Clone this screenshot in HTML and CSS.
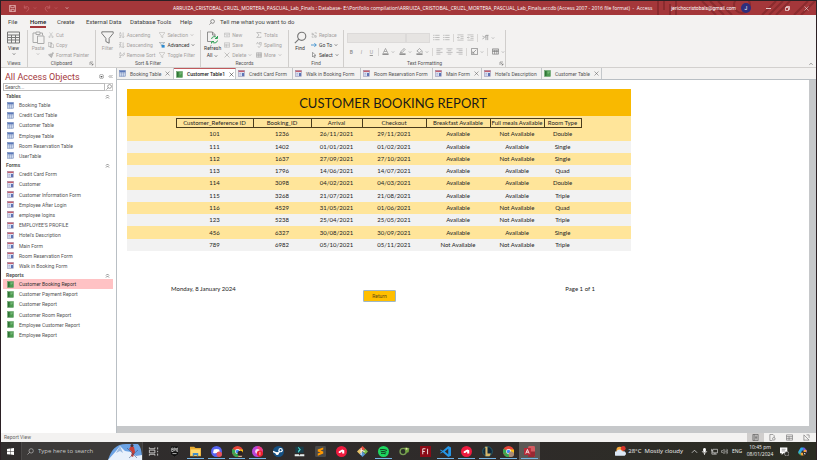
FILE: index.html
```html
<!DOCTYPE html>
<html lang="en">
<head>
<meta charset="utf-8">
<title>Customer Booking Report - Access</title>
<link rel="stylesheet" href="styles.css">
</head>
<body>
<svg class="sprite" aria-hidden="true">
  <symbol id="table" viewBox="0 0 14 14"><rect x="1" y="1" width="12" height="12" fill="#e9eff8" stroke="#6d83b4"/><path d="M1 1h12v4H1z" fill="#5b78b8"/><path d="M5 4v9M9 4v9M1 7.500h12M1 10.500h12" stroke="#7d93c2"/></symbol>
  <symbol id="form" viewBox="0 0 14 14"><rect x="1" y="1" width="12" height="12" fill="#d9def0" stroke="#8a86ab"/><path d="M1 1h12v3H1z" fill="#c2616f"/><rect x="8" y="6" width="4" height="6" fill="#5d74b5"/><path d="M3 7h3M3 10h3" stroke="#8792bd"/></symbol>
  <symbol id="report" viewBox="0 0 14 14"><rect x="1" y="1" width="12" height="12" fill="#4c9a50" stroke="#5f9a63"/><path d="M2 2h3v10H2z" fill="#2f7437"/><path d="M7 4h5M7 6h3" stroke="#a9d9a5" stroke-width="1"/></symbol>
  <symbol id="x" viewBox="0 0 10 10"><path d="M1 1l8 8M9 1l-8 8" fill="none" stroke="currentColor"/></symbol>
  <symbol id="down" viewBox="0 0 10 10"><path d="M2 3.500l3 3 3-3" fill="none" stroke="currentColor" stroke-width="1.500"/></symbol>
  <symbol id="up2" viewBox="0 0 10 10"><path d="M2 5l3-3 3 3M2 9l3-3 3 3" fill="none" stroke="currentColor" stroke-width="1.300"/></symbol>
  <symbol id="search" viewBox="0 0 16 16"><circle cx="9.500" cy="6.500" r="5" fill="none" stroke="currentColor" stroke-width="1.400"/><path d="M6 10l-5 5" stroke="currentColor" stroke-width="1.400"/></symbol>
  <symbol id="funnel" viewBox="0 0 16 16"><path d="M1 1h14v2L10 9v6l-4-2V9L1 3z" fill="none" stroke="currentColor" stroke-width="1.200"/></symbol>
  <symbol id="launch" viewBox="0 0 10 10"><path d="M2 8V2h6M4 4l4 4M8 5v3H5" fill="none" stroke="currentColor"/></symbol>
  <symbol id="lines" viewBox="0 0 16 16"><path d="M1 2h14M1 6h9M1 10h14M1 14h9" stroke="currentColor" stroke-width="1.300"/></symbol>
  <symbol id="linesc" viewBox="0 0 16 16"><path d="M1 2h14M4 6h8M1 10h14M4 14h8" stroke="currentColor" stroke-width="1.300"/></symbol>
  <symbol id="linesr" viewBox="0 0 16 16"><path d="M1 2h14M6 6h9M1 10h14M6 14h9" stroke="currentColor" stroke-width="1.300"/></symbol>
  <symbol id="bullets" viewBox="0 0 16 16"><path d="M5 3h10M5 8h10M5 13h10" stroke="currentColor" stroke-width="1.300"/><path d="M1 3h2M1 8h2M1 13h2" stroke="currentColor" stroke-width="2"/></symbol>
  <symbol id="indent" viewBox="0 0 16 16"><path d="M1 2h14M8 6h7M8 10h7M1 14h14M6 8H1M3 6L1 8l2 2" fill="none" stroke="currentColor" stroke-width="1.200"/></symbol>
  <symbol id="red-disc" viewBox="0 0 16 16"><circle cx="8" cy="8" r="8" fill="#ee1b3f"/><path d="M4 10V8l5-3 3 1v5H9V8L6 10z" fill="#fff"/></symbol>
  <symbol id="chrome" viewBox="0 0 16 16"><circle cx="8" cy="8" r="8" fill="#e8463a"/><path d="M8 8L1 12A8 8 0 0 1 1 4z" fill="#36a852"/><path d="M1 12a8 8 0 0 0 8 4l3-6-4-1z" fill="#36a852"/><path d="M8 5h7.500A8 8 0 0 1 9 16l3-6z" fill="#fbc116"/><circle cx="8" cy="8" r="3.500" fill="#fff"/><circle cx="8" cy="8" r="2.600" fill="#4285f4"/></symbol>
</svg>

<header class="titlebar">
  <div class="quick">
    <button aria-label="Save"><svg viewBox="0 0 16 16"><path d="M1 1h14v14H1zM4 1v5h8V1M4 15v-5h8v5M6 12v3" fill="none" stroke="#f0c9ca" stroke-width="1.500"/></svg></button>
    <button class="faded" aria-label="Undo"><svg viewBox="0 0 16 16"><path d="M3 1v6h6M3 7c5-6 11-3 10 2-1 3-3 5-5 6" fill="none" stroke="#c9696c" stroke-width="1.600"/></svg><svg class="tiny"><use href="#down"/></svg></button>
    <button class="faded" aria-label="Redo"><svg viewBox="0 0 16 16"><path d="M13 1v6H7M13 7C8 1 2 4 3 9c1 3 3 5 5 6" fill="none" stroke="#c9696c" stroke-width="1.600"/></svg><svg class="tiny"><use href="#down"/></svg></button>
    <button aria-label="Customize toolbar"><svg class="tiny"><use href="#down"/></svg></button>
  </div>
  <h1>ARRUIZA_CRISTOBAL_CRUZL_MORTERA_PASCUAL_Lab_Finals : Database- E:\Portfolio compilation\ARRUIZA_CRISTOBAL_CRUZL_MORTERA_PASCUAL_Lab_Finals.accdb (Access 2007 - 2016 file format) &nbsp;- &nbsp;Access</h1>
  <div class="account">
    <svg class="circuit" viewBox="0 0 160 14" preserveAspectRatio="none" aria-hidden="true"><g fill="none" stroke="#8a2b2e" stroke-width="2"><path d="M2 0v14M8 0v9M14 3v11M20 0v14M46 0l14 14M54 0l14 14M62 0l14 14"/><circle cx="86" cy="4" r="8"/><path d="M106 14l14-14M113 14l14-14M120 14l14-14M138 14l14-14M145 14l14-14"/></g></svg>
    <span class="mail">jerichocristobals@gmail.com</span><span class="avatar">J</span>
    <button aria-label="Minimize"><svg viewBox="0 0 10 10"><path d="M0 5h10" stroke="#fff" stroke-width="1.500"/></svg></button>
    <button aria-label="Restore"><svg viewBox="0 0 10 10"><path d="M1 3h6v6H1zM3 3V1h6v6H7" fill="none" stroke="#fff" stroke-width="1.300"/></svg></button>
    <button aria-label="Close"><svg><use href="#x"/></svg></button>
  </div>
</header>

<nav class="menu">
  <button class="w-file">File</button><button class="w-home on">Home</button><button class="w-create">Create</button><button class="w-ext">External Data</button><button class="w-db">Database Tools</button><button class="w-help">Help</button>
  <button class="tell"><svg><use href="#search"/></svg>Tell me what you want to do</button>
</nav>

<section class="ribbon" aria-label="Home ribbon">
  <div class="group g-views"><div class="tools">
    <button class="big dark"><svg viewBox="0 0 26 26"><path d="M1 2h24v22H1zM1 8h24M1 13h24M1 18h24M9 8v16M17 8v16" fill="none" stroke="#777" stroke-width="2"/></svg>View<svg class="tiny"><use href="#down"/></svg></button>
  </div><div class="label">Views</div></div>
  <div class="group g-clip"><div class="tools">
    <button class="big"><svg viewBox="0 0 26 26"><path d="M8 4H2v19h8M8 2h8v5H8zM16 4h5v5M11 10h13v15H11z" fill="none" stroke="#aaa" stroke-width="2"/></svg>Paste<svg class="tiny"><use href="#down"/></svg></button>
    <div class="stack">
      <button><svg viewBox="0 0 16 16"><path d="M4 1l7 10M12 1L5 11" stroke="#999"/><circle cx="4" cy="13" r="2" fill="none" stroke="#999"/><circle cx="12" cy="13" r="2" fill="none" stroke="#999"/></svg>Cut</button>
      <button><svg viewBox="0 0 16 16"><path d="M1 1h8v11H1zM6 4h5l4 4v7H6z" fill="#f3f2f1" stroke="#999" stroke-width="1.300"/></svg>Copy</button>
      <button><svg viewBox="0 0 16 16"><path d="M1 7l7-2 4 4-3 6zM9 5l4-4 2 2-4 5" fill="#bbb" stroke="#888"/></svg>Format Painter</button>
    </div>
  </div><div class="label">Clipboard<svg class="corner"><use href="#launch"/></svg></div></div>
  <div class="group g-sort"><div class="tools">
    <button class="big"><svg><use href="#funnel"/></svg>Filter</button>
    <div class="stack">
      <button><svg viewBox="0 0 16 16"><path d="M1 7l2.500-6L6 7M1 9h5l-5 6h5M11 1v14M8 12l3 3 3-3" fill="none" stroke="#999" stroke-width="1.300"/></svg>Ascending</button>
      <button><svg viewBox="0 0 16 16"><path d="M1 1h5L1 7h5M1 15l2.500-6L6 15M11 1v14M8 12l3 3 3-3" fill="none" stroke="#999" stroke-width="1.300"/></svg>Descending</button>
      <button><svg viewBox="0 0 16 16"><path d="M1 7l2.500-6L6 7M1 9h5l-5 6h5M8 9l6-7 2 3-6 6z" fill="none" stroke="#999" stroke-width="1.300"/></svg>Remove Sort</button>
    </div>
    <div class="stack">
      <button><svg><use href="#funnel"/></svg>Selection<svg class="tiny"><use href="#down"/></svg></button>
      <button class="dark"><svg viewBox="0 0 16 16"><path d="M1 1h14L10 7v3H6V7z" fill="#d5e9f8" stroke="#666"/><rect x="7" y="8" width="8" height="7" fill="#2b8ad0"/></svg>Advanced<svg class="tiny"><use href="#down"/></svg></button>
      <button><svg><use href="#funnel"/></svg>Toggle Filter</button>
    </div>
  </div><div class="label">Sort &amp; Filter</div></div>
  <div class="group g-rec"><div class="tools">
    <button class="big dark"><svg viewBox="0 0 26 26"><path d="M10 21H3V2h10l5 5v3M13 2v6h5" fill="none" stroke="#777" stroke-width="1.600"/><path d="M11 16a6 6 0 0 1 11-2M23 10v5h-5M23 19a6 6 0 0 1-11 2M11 25v-4h5" fill="none" stroke="#35a35a" stroke-width="2"/></svg>Refresh<span>All<svg class="tiny"><use href="#down"/></svg></span></button>
    <div class="stack">
      <button><svg viewBox="0 0 16 16"><path d="M1 3h14v10H1zM1 6h14M5 10h7" fill="none" stroke="#999"/></svg>New</button>
      <button><svg viewBox="0 0 16 16"><path d="M1 2h14v12H1zM1 6h14M1 10h14M6 6v8" fill="none" stroke="#999"/></svg>Save</button>
      <button><svg><use href="#x"/></svg>Delete<svg class="tiny"><use href="#down"/></svg></button>
    </div>
    <div class="stack">
      <button><svg viewBox="0 0 16 16"><path d="M13 4V1H2l6 7-6 7h11v-3" fill="none" stroke="#999" stroke-width="1.500"/></svg>Totals</button>
      <button><svg viewBox="0 0 16 16"><path d="M1 6l3-5 3 5M9 1h5v5H9zM5 11l3 4 7-8" fill="none" stroke="#999" stroke-width="1.300"/></svg>Spelling</button>
      <button><svg viewBox="0 0 16 16"><path d="M1 2h14v12H1zM1 6h14M1 10h14M6 2v12M11 2v12" fill="none" stroke="#777"/></svg>More<svg class="tiny"><use href="#down"/></svg></button>
    </div>
  </div><div class="label">Records</div></div>
  <div class="group g-find"><div class="tools">
    <button class="big dark"><svg><use href="#search"/></svg>Find</button>
    <div class="stack">
      <button><svg viewBox="0 0 16 16"><path d="M3 2v6h4V5H3M10 8v6h4v-4h-4M3 11v3h4M10 2h4v3" fill="none" stroke="#999" stroke-width="1.300"/></svg>Replace</button>
      <button class="dark"><svg viewBox="0 0 16 16"><path d="M0 8h14M9 3l5 5-5 5" fill="none" stroke="#1e7fc8" stroke-width="2"/></svg>Go To<svg class="tiny"><use href="#down"/></svg></button>
      <button class="dark"><svg viewBox="0 0 16 16"><path d="M4 1l9 8H9l2 5-2 1-2-5-3 3z" fill="#fff" stroke="#444" stroke-width="1.300"/></svg>Select<svg class="tiny"><use href="#down"/></svg></button>
    </div>
  </div><div class="label">Find</div></div>
  <div class="group g-text"><div class="format">
    <div class="line">
      <select class="font" aria-label="Font" disabled></select><select class="size" aria-label="Font size" disabled></select>
      <button aria-label="Bullets"><svg><use href="#bullets"/></svg></button><button aria-label="Numbering"><svg><use href="#bullets"/></svg></button><i></i>
      <button aria-label="Decrease indent"><svg><use href="#indent"/></svg></button><button aria-label="Increase indent"><svg><use href="#indent"/></svg></button><i></i>
      <button class="pair" aria-label="Text direction"><svg viewBox="0 0 16 16"><path d="M1 4l4 4-4 4M9 3v11M13 3v11M15 3H9a3 3 0 0 0 0 5" fill="none" stroke="#888" stroke-width="1.500"/></svg><svg class="tiny"><use href="#down"/></svg></button>
    </div>
    <div class="line marks">
      <button><b>B</b></button><button><em>I</em></button><button><u>U</u></button><i></i>
      <button class="pair" aria-label="Font color"><svg viewBox="0 0 16 16"><path d="M3 11L8 1l5 10M5 8h6" fill="none" stroke="#888" stroke-width="1.500"/><path d="M1 14h14" stroke="#777" stroke-width="3"/></svg><svg class="tiny"><use href="#down"/></svg></button>
      <button class="pair" aria-label="Highlight color"><svg viewBox="0 0 16 16"><path d="M3 11l2-4 7-6 2 2-6 7z" fill="none" stroke="#888" stroke-width="1.500"/><path d="M1 14h14" stroke="#777" stroke-width="3"/></svg><svg class="tiny"><use href="#down"/></svg></button>
      <button class="pair" aria-label="Background color"><svg viewBox="0 0 16 16"><path d="M2 7l6-6 5 5-5 5zM14 7v4" fill="none" stroke="#888" stroke-width="1.500"/><path d="M1 14h14" stroke="#777" stroke-width="3"/></svg><svg class="tiny"><use href="#down"/></svg></button><i></i>
      <button aria-label="Align left"><svg><use href="#lines"/></svg></button><button aria-label="Center"><svg><use href="#linesc"/></svg></button><button aria-label="Align right"><svg><use href="#linesr"/></svg></button><i></i>
      <button class="pair" aria-label="Alternate row color"><svg viewBox="0 0 16 16"><path d="M1 1h14v14H1zM4 12l8-8M4 8v4h4" fill="none" stroke="#777" stroke-width="1.500"/></svg><svg class="tiny"><use href="#down"/></svg></button><i></i>
      <button class="pair" aria-label="Gridlines"><svg viewBox="0 0 16 16"><path d="M1 2h14v12H1zM1 8h14M6 5v9M11 5v9M1 5h14" fill="none" stroke="#777" stroke-width="1.500"/></svg><svg class="tiny"><use href="#down"/></svg></button>
    </div>
  </div><div class="label">Text Formatting<svg class="corner"><use href="#launch"/></svg></div></div>
  <button class="collapse" aria-label="Collapse ribbon"><svg viewBox="0 0 10 10"><path d="M1 7l4-4 4 4" fill="none" stroke="#555" stroke-width="1.500"/></svg></button>
</section>

<main>
  <aside>
    <div class="pane-head"><h2>All Access Objects</h2>
      <button aria-label="Choose view"><svg viewBox="0 0 10 10"><circle cx="5" cy="5" r="4.300" fill="none" stroke="#666"/><path d="M2.500 4h5L5 7.500z" fill="#555"/></svg></button>
      <button aria-label="Hide pane"><svg viewBox="0 0 10 10"><path d="M5 2L2 5l3 3M9 2L6 5l3 3" fill="none" stroke="#444"/></svg></button></div>
    <div class="find"><input type="text" placeholder="Search..." aria-label="Search objects"><button aria-label="Search"><svg><use href="#search"/></svg></button></div>
    <h3>Tables<svg><use href="#up2"/></svg></h3>
    <ul class="six">
      <li><a href="#"><svg><use href="#table"/></svg>Booking Table</a></li>
      <li><a href="#"><svg><use href="#table"/></svg>Credit Card Table</a></li>
      <li><a href="#"><svg><use href="#table"/></svg>Customer Table</a></li>
      <li><a href="#"><svg><use href="#table"/></svg>Employee Table</a></li>
      <li><a href="#"><svg><use href="#table"/></svg>Room Reservation Table</a></li>
      <li><a href="#"><svg><use href="#table"/></svg>UserTable</a></li>
    </ul>
    <h3>Forms<svg><use href="#up2"/></svg></h3>
    <ul class="ten">
      <li><a href="#"><svg><use href="#form"/></svg>Credit Card Form</a></li>
      <li><a href="#"><svg><use href="#form"/></svg>Customer</a></li>
      <li><a href="#"><svg><use href="#form"/></svg>Customer Information Form</a></li>
      <li><a href="#"><svg><use href="#form"/></svg>Employee After Login</a></li>
      <li><a href="#"><svg><use href="#form"/></svg>employee logins</a></li>
      <li><a href="#"><svg><use href="#form"/></svg>EMPLOYEE'S PROFILE</a></li>
      <li><a href="#"><svg><use href="#form"/></svg>Hotel's Description</a></li>
      <li><a href="#"><svg><use href="#form"/></svg>Main Form</a></li>
      <li><a href="#"><svg><use href="#form"/></svg>Room Reservation Form</a></li>
      <li><a href="#"><svg><use href="#form"/></svg>Walk in Booking Form</a></li>
    </ul>
    <h3>Reports<svg><use href="#up2"/></svg></h3>
    <ul class="six">
      <li class="sel"><a href="#"><svg><use href="#report"/></svg>Customer Booking Report</a></li>
      <li><a href="#"><svg><use href="#report"/></svg>Customer Payment Report</a></li>
      <li><a href="#"><svg><use href="#report"/></svg>Customer Report</a></li>
      <li><a href="#"><svg><use href="#report"/></svg>Customer Room Report</a></li>
      <li><a href="#"><svg><use href="#report"/></svg>Employee Customer Report</a></li>
      <li><a href="#"><svg><use href="#report"/></svg>Employee Report</a></li>
    </ul>
  </aside>

  <div class="work">
    <div class="tabs" role="tablist">
      <button role="tab" class="t1"><svg><use href="#table"/></svg><span>Booking Table</span><svg class="close"><use href="#x"/></svg></button>
      <button role="tab" class="t2 on"><svg><use href="#report"/></svg><span>Customer Table1</span><svg class="close"><use href="#x"/></svg></button>
      <button role="tab" class="t1"><svg><use href="#form"/></svg><span>Credit Card Form</span></button>
      <button role="tab" class="t3"><svg><use href="#form"/></svg><span>Walk in Booking Form</span></button>
      <button role="tab" class="t4"><svg><use href="#form"/></svg><span>Room Reservation Form</span></button>
      <button role="tab" class="t5"><svg><use href="#form"/></svg><span>Main Form</span><svg class="close"><use href="#x"/></svg></button>
      <button role="tab" class="t6"><svg><use href="#form"/></svg><span>Hotel's Description</span></button>
      <button role="tab" class="t6"><svg><use href="#report"/></svg><span>Customer Table</span><svg class="close"><use href="#x"/></svg></button>
    </div>
    <div class="canvas">
      <article class="report">
        <h2>CUSTOMER BOOKING REPORT</h2>
        <div class="sheet">
        <table>
          <colgroup><col class="c0"><col class="c1"><col class="c2"><col class="c3"><col class="c4"><col class="c4"><col class="c5"><col class="c6"><col></colgroup>
          <thead><tr><td></td><th>Customer_Reference ID</th><th>Booking_ID</th><th>Arrival</th><th>Checkout</th><th>Breakfast Available</th><th>Full meals Available</th><th>Room Type</th><td></td></tr></thead>
          <tbody>
            <tr><td></td><td>101</td><td>1236</td><td>26/11/2021</td><td>29/11/2021</td><td>Available</td><td>Not Available</td><td>Double</td><td></td></tr>
            <tr><td></td><td>111</td><td>1402</td><td>01/01/2021</td><td>01/02/2021</td><td>Available</td><td>Available</td><td>Single</td><td></td></tr>
            <tr><td></td><td>112</td><td>1637</td><td>27/09/2021</td><td>27/10/2021</td><td>Available</td><td>Not Available</td><td>Single</td><td></td></tr>
            <tr><td></td><td>113</td><td>1796</td><td>14/06/2021</td><td>14/07/2021</td><td>Available</td><td>Available</td><td>Quad</td><td></td></tr>
            <tr><td></td><td>114</td><td>3098</td><td>04/02/2021</td><td>04/03/2021</td><td>Available</td><td>Available</td><td>Double</td><td></td></tr>
            <tr><td></td><td>115</td><td>3268</td><td>21/07/2021</td><td>21/08/2021</td><td>Available</td><td>Available</td><td>Triple</td><td></td></tr>
            <tr><td></td><td>116</td><td>4529</td><td>31/05/2021</td><td>01/06/2021</td><td>Available</td><td>Not Available</td><td>Quad</td><td></td></tr>
            <tr><td></td><td>123</td><td>5238</td><td>25/04/2021</td><td>25/05/2021</td><td>Available</td><td>Not Available</td><td>Triple</td><td></td></tr>
            <tr><td></td><td>456</td><td>6327</td><td>30/08/2021</td><td>30/09/2021</td><td>Available</td><td>Available</td><td>Single</td><td></td></tr>
            <tr><td></td><td>789</td><td>6982</td><td>05/10/2021</td><td>05/11/2021</td><td>Not Available</td><td>Not Available</td><td>Triple</td><td></td></tr>
          </tbody>
        </table>
        </div>
        <footer><span>Monday, 8 January 2024</span><button>Return</button><span>Page 1 of 1</span></footer>
      </article>
    </div>
  </div>
</main>

<div class="status"><span>Report View</span>
  <div class="views">
    <button class="on" aria-label="Report view"><svg viewBox="0 0 16 16"><path d="M2 1h12v14H2zM5 1v14M7 5h5M7 8h5M7 11h5" fill="none" stroke="#555" stroke-width="1.500"/></svg></button>
    <button aria-label="Print preview"><svg viewBox="0 0 16 16"><path d="M8 15H2V1h7l3 3v4" fill="none" stroke="#777" stroke-width="1.500"/><circle cx="11" cy="11" r="3" fill="none" stroke="#777" stroke-width="1.500"/></svg></button>
    <button aria-label="Layout view"><svg viewBox="0 0 16 16"><path d="M1 2h14v12H1zM1 6h14M1 10h14M7 6v8" fill="none" stroke="#777" stroke-width="1.500"/></svg></button>
    <button aria-label="Design view"><svg viewBox="0 0 16 16"><path d="M2 15V2l12 12H2M14 2v7M8 2h6" fill="none" stroke="#777" stroke-width="1.500"/></svg></button>
  </div>
</div>

<div class="taskbar">
  <button class="start" aria-label="Start"><svg viewBox="0 0 16 16"><path d="M0 2l7-1v6.500H0zM8 1l8-1v7.500H8zM0 8.500h7V15l-7-1zM8 8.500h8V16l-8-1z" fill="#fff"/></svg></button>
  <label class="seek"><svg><use href="#search"/></svg><input type="text" placeholder="Type here to search">
    <svg class="scene" viewBox="0 0 34 17"><path d="M0 17C3 7 8 1 18 1h12c3 3 4 8 4 16z" fill="#6ba2e4"/><path d="M0 17L8 8l4-5 5 5 6 1 5 4 6-1v5z" fill="#e8f0fb"/><path d="M8 10l4-7 3 7-3-2z" fill="#9ab8df"/><path d="M23 3l3 1 1 5-2 5-2-1 1-4-3-3z" fill="#c93f37"/><circle cx="24" cy="2.500" r="1.500" fill="#473039"/><path d="M19 5l10 10M30 7l-9 8" stroke="#344a72" stroke-width="0.500"/></svg></label>
  <div class="apps">
    <button aria-label="Task view"><svg viewBox="0 0 16 16"><path d="M2 2v2h8V2M2 14v-2h8v2M2 6h8v4H2zM14 2v3M14 7v2M14 11v3" fill="none" stroke="#ddd" stroke-width="1.200"/></svg></button>
    <button aria-label="Epic Games"><svg viewBox="0 0 16 16"><path d="M2 0h12v12l-6 4-6-4z" fill="#111" stroke="#555" stroke-width="0.500"/><path d="M6 3H4v5h2M4 5h2M7 8V3h2v3H7M10.500 3v5M13 3h-1v5h1M5 11h6" stroke="#eee" fill="none"/></svg></button>
    <button class="run" aria-label="File Explorer"><svg viewBox="0 0 16 16"><path d="M0 1h6l2 2h8v12H0z" fill="#e8ab32"/><path d="M1 5h14v9H1z" fill="#ffd96f"/><path d="M4 10h8v5h-2v-2H6v2H4z" fill="#438ec8"/></svg></button>
    <button class="run" aria-label="Discord"><svg viewBox="0 0 16 16"><circle cx="8" cy="8" r="8" fill="#5865f2"/><path d="M4 5c3-1 5-1 8 0l1 5-3 1-1-1H7l-1 1-3-1z" fill="#fff"/><circle cx="12" cy="12" r="4" fill="#e6535c"/></svg></button>
    <button class="run" aria-label="Chrome"><svg viewBox="0 0 16 16"><use href="#chrome"/><circle cx="12" cy="11" r="4" fill="#2b2222"/><path d="M9 14h6l-1 2h-4z" fill="#d9ae8a"/></svg></button>
    <button class="run" aria-label="Opera"><svg viewBox="0 0 16 16"><circle cx="8" cy="8" r="8" fill="#b845d8"/><path d="M8 0a8 8 0 0 1 8 8H8z" fill="#f23d7f"/><circle cx="8" cy="8" r="3.500" fill="#f7d8ef"/><circle cx="11.500" cy="11" r="4.500" fill="#ec1f2c"/><path d="M11.500 8.500v5" stroke="#fff"/></svg></button>
    <button aria-label="Steam"><svg viewBox="0 0 16 16"><circle cx="8" cy="8" r="8" fill="#155184"/><path d="M0 8l7 3 4-5" stroke="#fff" stroke-width="2" fill="none"/><circle cx="11" cy="6" r="3.200" fill="#fff"/><circle cx="11" cy="6" r="1.500" fill="#155184"/><circle cx="6" cy="11" r="2.200" fill="#fff"/></svg></button>
    <button aria-label="Filmora"><svg viewBox="0 0 16 16"><path d="M2 1h12v9H2z" fill="#193e4a"/><path d="M6 1l4 4-4 5V7l2-2-2-2z" fill="#4adfd2"/><path d="M1 12h6l1 2 1-2h6v3H1z" fill="#e8eeee"/></svg></button>
    <button aria-label="Sublime Text"><svg viewBox="0 0 16 16"><rect width="16" height="16" rx="2" fill="#4b4a49"/><path d="M12 2v3L8 6.500l4 1.500v3l-8 3v-3l4-1.500L4 8V5z" fill="#ff9800"/></svg></button>
    <button aria-label="Riot Client"><svg><use href="#red-disc"/></svg></button>
    <button aria-label="Git"><svg viewBox="0 0 16 16"><path d="M8 0l4 4-4 4-4-4z" fill="#e55140"/><path d="M12 4l4 4-4 4-4-4z" fill="#7fbd4d"/><path d="M4 4l4 4-4 4-4-4z" fill="#e9c46a"/><path d="M8 8l4 4-4 4-4-4z" fill="#5895d0"/><path d="M6 3v10M6 6l5 2" stroke="#fff" stroke-width="1.400"/></svg></button>
    <button class="run" aria-label="Spotify"><svg viewBox="0 0 16 16"><circle cx="8" cy="8" r="8" fill="#1ed760"/><path d="M3 5.500c4-1 7-.5 10 1M4 8.500c3-1 6-.5 8 .7M4.500 11c3-.7 5-.3 6.500.7" fill="none" stroke="#143b20" stroke-width="1.500"/></svg></button>
    <button aria-label="Editor"><svg viewBox="0 0 16 16"><circle cx="6" cy="8" r="4.500" fill="#292e28" stroke="#789c54" stroke-width="2"/><path d="M8 2l7 1-1 6-4 1z" fill="#73a742"/><circle cx="11" cy="4" r="1.500" fill="#e7dfab"/></svg></button>
    <button aria-label="Flash"><svg viewBox="0 0 16 16"><rect width="16" height="16" fill="#8b0b17"/><path d="M4 12V4h4M4 8h3M11 4v8" stroke="#fff" fill="none" stroke-width="1.200"/></svg></button>
    <button class="run" aria-label="Visual Studio Code"><svg viewBox="0 0 16 16"><path d="M12 0l4 2v12l-4 2-8-7-3 2-1-1 3-2-3-2 1-1 3 2zM12 4L7 8l5 4z" fill="#2496e8" fill-rule="evenodd"/></svg></button>
    <button class="run" aria-label="Riot"><svg><use href="#red-disc"/></svg></button>
    <button class="run" aria-label="League of Legends"><svg viewBox="0 0 16 16"><circle cx="8" cy="8" r="7" fill="#10273a" stroke="#247489"/><path d="M4 1h4v10h5l-2 4H5V3z" fill="#d6b66a"/></svg></button>
    <button class="run" aria-label="Chrome profile"><svg viewBox="0 0 16 16"><use href="#chrome"/><circle cx="12" cy="12" r="4" fill="#a98b75"/></svg></button>
    <button class="run active" aria-label="Access"><svg viewBox="0 0 16 16"><rect x="6" y="0" width="10" height="16" rx="2" fill="#d45b61"/><path d="M6 8h10v6a2 2 0 0 1-2 2H6z" fill="#992934"/><rect y="3" width="10" height="10" fill="#b72a38"/><path d="M2.500 11L5 5l2.500 6M3.500 9h3" stroke="#fff" fill="none" stroke-width="1.200"/></svg></button>
  </div>
  <div class="tray">
    <button class="weather"><svg viewBox="0 0 16 16"><circle cx="7" cy="6" r="5" fill="#f5a83a"/><path d="M1 14a3 3 0 0 1 1-6 5 5 0 0 1 9 0 3 3 0 0 1 3 6z" fill="#dce7f6"/><circle cx="12" cy="3.500" r="3.500" fill="#d8332b"/></svg>28°C &nbsp;Mostly cloudy</button>
    <button aria-label="Hidden icons"><svg viewBox="0 0 16 16"><path d="M2 11l6-6 6 6" fill="none" stroke="#eee" stroke-width="1.600"/></svg></button>
    <button aria-label="Microphone"><svg viewBox="0 0 16 16"><rect x="5" y="0" width="6" height="10" rx="3" fill="#fff"/><path d="M3 7c0 6 10 6 10 0M8 11v5" fill="none" stroke="#fff" stroke-width="1.500"/></svg></button>
    <button aria-label="Network"><svg viewBox="0 0 16 16"><path d="M4 3h11v8H4zM1 2v4h3M2 6v8h11M9 11v3" fill="none" stroke="#eee" stroke-width="1.400"/></svg></button>
    <button aria-label="Volume"><svg viewBox="0 0 16 16"><path d="M1 6h3l3-3v10l-3-3H1zM9 6c1 1 1 3 0 4M11 4c2 2 2 6 0 8M13 2c3 3 3 9 0 12" fill="none" stroke="#ddd" stroke-width="1.200"/></svg></button>
    <button class="lang">ENG</button>
    <button class="clock"><span>10:45 pm</span><span>08/01/2024</span></button>
    <button class="wide" aria-label="Notifications"><svg viewBox="0 0 16 16"><path d="M0 1h13v10H6l-3 3v-3H0z" fill="#fff"/><path d="M3 4h7M3 7h6" stroke="#555"/><circle cx="12" cy="12" r="4" fill="#30302b" stroke="#ccc"/></svg></button>
    <button class="wide" aria-label="Copilot"><svg viewBox="0 0 16 16"><path d="M5 1h5l2 5H7l-2 6H2C0 12 0 10 1 7z" fill="#2fa8e8"/><path d="M10 1c3 0 3 2 4 4h1c2 1 1 4 0 6l-2-5H8z" fill="#6d55e0"/><path d="M11 15H6l-2-5h5l2-5h3c2 1 1 4 0 6z" fill="#f2a33a"/><path d="M1 7l3 5 2 3C3 15 3 13 2 12z" fill="#55c66a"/><path d="M9 9h6v6H9z" fill="#222"/><path d="M10 13l2-3 2 3z" fill="#fff"/></svg></button>
  </div>
</div>
</body>
</html>
```
FILE: styles.css
```css
* { box-sizing: border-box; }
body {
  margin: 0; height: 100vh; display: flex; flex-direction: column; overflow: hidden;
  border: 1px solid #2b2024; border-bottom: 0; background: #f3f2f1;
  font: 5px/8px Roboto, "Noto Sans", sans-serif; color: #555;
}
h1, h2, h3, ul { margin: 0; padding: 0; font-weight: 400; }
button, input, select { font: inherit; color: inherit; background: none; border: 0; margin: 0; padding: 0; }
button { display: flex; align-items: center; white-space: nowrap; }
svg { width: 7px; height: 7px; flex: none; display: block; }
svg.tiny { width: 4px; height: 4px; }
.sprite { position: absolute; width: 0; height: 0; }

.titlebar { flex: none; height: 14px; display: flex; align-items: center; background: #a4373a; color: #fff; }
.quick { display: flex; align-items: center; width: 172px; padding-left: 8px; gap: 7px; }
.quick button { gap: 3px; }
.faded { color: #c9696c; }
.titlebar h1 { font: 5px/8px "Open Sans", "Noto Sans", sans-serif; white-space: nowrap; }
.account { position: relative; display: flex; align-items: center; justify-content: flex-end; flex: 1; height: 14px; padding-right: 7px; }
.account > * { position: relative; }
.account .circuit { position: absolute; top: 0; right: 0; width: 160px; height: 14px; }
.avatar { width: 10px; height: 10px; margin: 0 15px 0 5px; border-radius: 50%; background: #2e2f7d; text-align: center; line-height: 10px; }
.account button { margin-left: 14px; }
.account .avatar + button { margin-left: 0; }
.account button svg { width: 5px; height: 5px; }

.menu { flex: none; height: 14px; display: flex; align-items: center; padding-left: 7px; font-size: 6px; color: #444; }
.menu button { height: 12px; }
.menu .on { font-weight: 500; color: #222; box-shadow: inset 0 -2px #a4373a; }
.w-file { width: 22px; }
.w-home { width: 16px; margin-right: 11px; }
.w-create { width: 29px; }
.w-ext { width: 44px; }
.w-db { width: 50px; }
.w-help { width: 29px; }
.tell { gap: 5px; }
.tell svg { width: 6px; height: 6px; }

.ribbon { flex: none; height: 39px; display: flex; border-bottom: 1px solid #d2d0ce; color: #a3a19f; }
.group { display: flex; flex-direction: column; border-right: 1px solid #d0cecc; margin: 1px 0 0; }
.tools { display: flex; flex: 1; }
.label { position: relative; height: 7px; line-height: 7px; text-align: center; color: #555; }
.corner { position: absolute; right: 1px; top: 1px; width: 5px; height: 5px; }
.big { flex-direction: column; height: 30px; line-height: 7px; padding-top: 1px; }
.big > svg:first-child { width: 13px; height: 13px; margin-bottom: 1px; color: #777; }
.big span { display: flex; align-items: center; gap: 2px; }
.dark { color: #333; }
.stack { display: flex; flex-direction: column; }
.stack button { height: 10px; gap: 2px; }
.stack svg:first-child { width: 6px; height: 6px; }
.g-views { width: 27px; }
.g-views .big { width: 25px; }
.g-clip { width: 68px; }
.g-clip .big { width: 20px; }
.g-sort { width: 105px; }
.g-sort .big { width: 23px; }
.g-sort .stack { width: 41px; }
.g-rec { width: 88px; }
.g-rec .big { width: 24px; }
.g-rec .stack { width: 33px; }
.g-find { width: 55px; }
.g-find .big { width: 22px; }
.g-text { width: 162px; }
.format { flex: 1; padding-left: 3px; }
.line { display: flex; align-items: center; gap: 3px; height: 15px; color: #999; }
.line button { width: 7px; justify-content: center; }
.line .pair { width: 14px; gap: 2px; }
.line i { width: 1px; height: 8px; background: #d8d6d4; }
.marks { height: 13px; padding-left: 1px; }
.line select { height: 10px; background: #e1dfdd; border: 1px solid #d3d1cf; appearance: none; }
.font { width: 59px; }
.size { width: 24px; margin-left: -3px; }
.collapse { margin: auto 3px 1px auto; }
.collapse svg { width: 4px; height: 4px; }

main { flex: 1; min-height: 0; display: flex; }
aside { width: 116px; flex: none; padding: 2px 3px 0 2px; background: #fff; border-right: 1px solid #b9bfc4; }
.pane-head { display: flex; align-items: center; gap: 4px; height: 13px; }
.pane-head h2 { flex: 1; padding-left: 2px; font: 9px/12px Roboto, "Noto Sans", sans-serif; color: #a4373a; }
.pane-head svg { width: 5px; height: 5px; }
.find { display: flex; height: 8px; margin-bottom: 1px; }
.find input { flex: 1; min-width: 0; height: 8px; border: 1px solid #bbb; line-height: 6px; padding-left: 1px; }
.find button { width: 8px; justify-content: center; border: 1px solid #ccc; border-left: 0; }
.find svg { width: 6px; height: 6px; }
input::placeholder { color: inherit; opacity: 1; }
aside h3 { display: flex; justify-content: space-between; align-items: center; height: 8px; padding: 0 3px; font-size: 5px; font-weight: 700; }
aside h3 svg { width: 5px; height: 5px; }
ul { list-style: none; display: flex; flex-direction: column; }
.six { height: 61px; }
.ten { height: 102px; }
li { flex: 1; display: flex; }
li a { display: flex; align-items: center; gap: 5px; flex: 1; padding-left: 4px; color: inherit; text-decoration: none; }
.sel { background: #ffc2c4; color: #333; }

.work { flex: 1; min-width: 0; display: flex; flex-direction: column; }
.tabs { flex: none; display: flex; height: 12px; border-bottom: 1px solid #b9bfc4; }
.tabs button { padding: 0 3px 0 2px; gap: 4px; border-right: 1px solid #c4c8cb; }
.tabs span { flex: 1; text-align: left; }
.tabs .on { background: #fff; border-top: 1px solid #c0595c; font-weight: 500; color: #222; }
.tabs .close { width: 5px; height: 5px; }
.t1 { width: 57px; }
.t2 { width: 62px; }
.t3 { width: 68px; }
.t4 { width: 72px; }
.t5 { width: 49px; }
.t6 { width: 60px; }
.canvas { flex: 1; background: #fff; border-right: 7px solid #c6c8ca; border-bottom: 7px solid #c6c8ca; padding: 9px 10px; }
.report { max-width: 504px; font: 6px/8px Lato, "Open Sans", sans-serif; color: #222; }
.report h2 { height: 27px; background: #f9b900; color: #1a1a1a; text-align: center; font-size: 13px; line-height: 28px; padding-left: 28px; }
.sheet { padding-top: 2px; background: #ffe59a; }
.report table { width: 100%; height: 133px; table-layout: fixed; border-collapse: collapse; }
.report th, .report td { padding: 0; text-align: center; font-weight: 400; white-space: nowrap; }
.report thead tr { height: 9px; background: #ffe59a; }
.report th { border: 1px solid #4a3c1c; }
.report tbody tr { background: #f2f2f2; }
.report tbody tr:nth-child(odd) { background: #ffe59a; }
.c0 { width: 49px; }
.c1 { width: 77px; }
.c2 { width: 58px; }
.c3 { width: 51px; }
.c4 { width: 64px; }
.c5 { width: 54px; }
.c6 { width: 37px; }
.report footer { display: flex; align-items: flex-start; padding: 34px 36px 0 44px; }
.report footer span:first-child { width: 192px; }
.report footer span:last-child { margin-left: auto; }
.report footer button { width: 33px; height: 12px; margin-top: 5px; justify-content: center; background: #ffbf00; border: 1px solid #9db7c8; border-radius: 1px; font: 5px/8px Roboto, sans-serif; color: #5d4a17; }

.status { flex: none; height: 9px; display: flex; justify-content: space-between; padding-left: 3px; line-height: 9px; color: #666; }
.views { display: flex; padding-right: 1px; }
.views button { width: 17px; justify-content: center; }
.views .on { background: #d0cecd; }

.taskbar { flex: none; height: 18px; margin: 0 -1px; display: flex; background: linear-gradient(90deg, #302d2d, #2f2b2a 60%, #2b2d23); color: #f0f0f0; font: 6px/8px "Open Sans", "Noto Sans", sans-serif; }
.start { width: 21px; justify-content: center; }
.seek { width: 122px; display: flex; align-items: center; gap: 4px; padding-left: 5px; background: #3d3b3a; border: 1px solid #4b4948; border-width: 0 1px; color: #c8c8c8; }
.seek input { flex: 1; min-width: 0; }
.seek svg { width: 7px; height: 7px; }
.seek .scene { width: 34px; height: 17px; align-self: flex-end; }
.apps { display: flex; width: 397px; }
.apps button { flex: 1; justify-content: center; position: relative; }
.apps svg { width: 11px; height: 11px; }
.apps .run::after { content: ""; position: absolute; left: 2px; right: 2px; bottom: 1px; height: 1px; background: #76b5e4; }
.apps .active { background: #5b5855; }
.tray { flex: 1; display: flex; justify-content: flex-end; padding-right: 6px; }
.tray button { width: 10px; justify-content: center; }
.tray .weather { width: auto; gap: 2px; margin-right: 6px; }
.weather svg { width: 11px; height: 11px; }
.tray .lang { width: 16px; font-size: 5px; }
.tray .clock { width: 30px; flex-direction: column; font-size: 5px; line-height: 7px; }
.tray .wide { width: 18px; }
.wide svg { width: 9px; height: 9px; }
```
